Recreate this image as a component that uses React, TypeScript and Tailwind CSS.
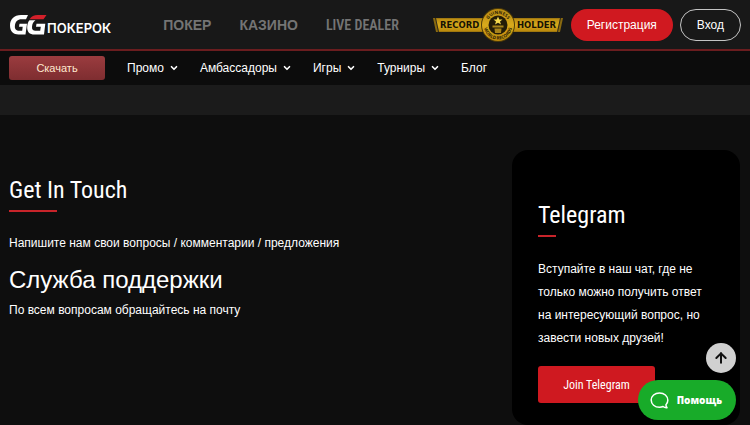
import React from 'react';
import { ArrowUp, ChevronDown } from 'lucide-react';

const condensed = "font-['Roboto_Condensed','Liberation_Sans_Narrow',sans-serif]";

const menu = [
    { label: 'Промо', dropdown: true },
    { label: 'Амбассадоры', dropdown: true },
    { label: 'Игры', dropdown: true },
    { label: 'Турниры', dropdown: true },
    { label: 'Блог', dropdown: false },
];

const Logo = () => (
    <a href="/" aria-label="GGПокерок" className="flex items-end">
        <svg viewBox="0 0 38 20" className="w-[38px] h-5" aria-hidden="true">
            <path
                d="M19 0H12C5 0 1 4.500 1 10.500C1 16.500 4.500 19.500 9.500 19.500H16.500L18 8.800H10.500L10 11.800H13.700L13.200 15.800H10.500C7 15.800 5.600 14 5.900 10.800C6.300 6.500 8.600 4.300 12.500 4.300H17Z"
                fill="#fff"
            />
            <path
                d="M20.500 5.300H26.500C24.300 6.800 23.200 9 23 12C22.900 14.500 24 15.800 26.500 15.800H31.200L31.800 11.800H27L27.500 8.800H36.300L35 19.500H25.500C20.500 19.500 18 17 18.200 12C18.300 9.200 19 7 20.500 5.300Z"
                fill="#fff"
            />
            <path d="M20.500 4.300C22.500 1.200 25 0 28.500 0H37.500L34.500 4.300Z" fill="#d3202a" />
        </svg>
        <span className="text-[13px] leading-[13px] font-semibold font-['Inter',sans-serif] text-white">ПОКЕРОК</span>
    </a>
);

const RecordBadge = () => (
    <svg viewBox="0 0 130 34" className="w-[130px] h-[34px] shrink-0" role="img" aria-label="Guinness record holder">
        <defs>
            <linearGradient id="gold" x1="0" y1="0" x2="0" y2="1">
                <stop offset="0" stopColor="#b98a12" />
                <stop offset="0.5" stopColor="#d8aa1c" />
                <stop offset="1" stopColor="#b8860b" />
            </linearGradient>
            <path id="arcTop" d="M54 17A11 11 0 0 1 76 17" />
            <path id="arcBottom" d="M51 15A14.200 14.200 0 1 0 79 15" />
        </defs>
        <path d="M0 10H130L127 24H3Z" fill="#8a6a10" />
        <path d="M3 10.500H127L124 23.500H6Z" fill="url(#gold)" />
        <path d="M2.500 10L5.500 24M127.500 10L124.500 24" stroke="#1a1a1a" strokeWidth="0.800" />
        <text x="7" y="20" fontSize="8.500" fontWeight="700" fontFamily="DejaVu Sans, sans-serif" fill="#171203">RECORD</text>
        <text x="84" y="20" fontSize="8.500" fontWeight="700" fontFamily="DejaVu Sans, sans-serif" fill="#171203">HOLDER</text>
        <circle cx="65" cy="17" r="17" fill="#4d3b08" />
        <circle cx="65" cy="17" r="16" fill="url(#gold)" />
        <circle cx="65" cy="17" r="9.500" fill="#241c07" />
        <text fontSize="4.500" fontWeight="700" fontFamily="Open Sans, sans-serif" fill="#2a2006" textAnchor="middle">
            <textPath href="#arcTop" startOffset="50%">GUINNESS</textPath>
        </text>
        <text fontSize="4.500" fontWeight="700" fontFamily="Open Sans, sans-serif" fill="#2a2006" textAnchor="middle">
            <textPath href="#arcBottom" startOffset="50%">WORLD RECORDS</textPath>
        </text>
        <path d="M65 8.500L66.300 11.500H69.500L67 13.500L68 16.500L65 14.700L62 16.500L63 13.500L60.500 11.500H63.700Z" fill="#f5d94e" />
        <path d="M59.500 17.500H70.500V19.500H59.500ZM61.500 20.500H68.500L68 25H62Z" fill="#a8841a" />
    </svg>
);

const Header = () => (
    <header className="bg-[#181818]">
        <div className="flex items-center h-[51px] px-[9px] border-b-2 border-[#6b1d1f]">
            <Logo />
            <nav className="flex items-center gap-7 ml-[52px] mr-auto text-sm font-bold text-[#747474]">
                <a href="/poker">ПОКЕР</a>
                <a href="/casino">КАЗИНО</a>
                <a href="/live" className={`${condensed} font-semibold`}>LIVE DEALER</a>
            </nav>
            <RecordBadge />
            <button className="h-8 px-4 ml-2 rounded-full bg-[#d01920] text-xs text-white shrink-0">Регистрация</button>
            <button className="h-8 px-4 ml-[7px] rounded-full border border-[#c4c4c4] text-xs text-white shrink-0">Вход</button>
        </div>
        <div className="flex items-center h-[34px] pl-[9px] bg-[#0c0c0c]">
            <button className="w-24 h-6 mr-[22px] rounded-[3px] bg-linear-to-b from-[#9b3c3f] to-[#7e2d30] text-[11px] text-[#ffe9cf]">
                Скачать
            </button>
            <nav className="flex items-center gap-[21px] text-xs text-white">
                {menu.map((item) => (
                    <a key={item.label} href="#" className="flex items-center gap-[5px]">
                        {item.label}
                        {item.dropdown && <ChevronDown className="w-[10px] h-[10px]" strokeWidth={4} />}
                    </a>
                ))}
            </nav>
        </div>
    </header>
);

const Contact = () => (
    <section className="flex-1 pt-[59px]">
        <h1 className={`${condensed} text-2xl leading-8`}>Get In Touch</h1>
        <div className="w-12 h-[2px] mt-1 bg-[#c8242a]" />
        <p className="mt-[21px] text-xs leading-5">Напишите нам свои вопросы / комментарии / предложения</p>
        <h2 className="mt-[11px] text-2xl leading-8">Служба поддержки</h2>
        <p className="mt-1 text-xs leading-5">По всем вопросам обращайтесь на почту</p>
    </section>
);

const TelegramCard = () => (
    <aside className="w-[228px] mt-[35px] px-[26px] pt-[49px] pb-[22px] rounded-[16px] bg-black">
        <h2 className={`${condensed} text-2xl leading-8`}>Telegram</h2>
        <div className="w-[18px] h-[2px] mt-1 bg-[#c8242a]" />
        <p className="mt-[21px] text-xs leading-[23px]">
            Вступайте в наш чат, где не только можно получить ответ на интересующий вопрос, но завести новых друзей!
        </p>
        <a
            href="#"
            className={`${condensed} flex items-center justify-center w-[117px] h-[37px] mt-4 rounded-[3px] bg-[#cf1920] text-xs`}
        >
            Join Telegram
        </a>
    </aside>
);

const App = () => {
    return (
        <div className="min-h-screen bg-[#0e0e0e] font-['Liberation_Sans',Arial,sans-serif] text-white">
            <Header />
            <div className="h-[30px] bg-[#1b1b1b]" />
            <main className="flex pl-[9px] pr-[10px]">
                <Contact />
                <TelegramCard />
            </main>

            {/* Floating controls */}
            <div className="fixed right-[14px] bottom-[5px] flex flex-col items-end gap-[7px]">
                <button aria-label="Наверх" className="flex items-center justify-center w-[30px] h-[30px] rounded-full bg-[#d0d0d0] text-[#111]">
                    <ArrowUp className="w-4 h-4" strokeWidth={3} />
                </button>
                <button className="flex items-center h-10 pl-3 pr-[14px] gap-2 rounded-full bg-[#18ab29] text-[10px] font-extrabold font-['Open_Sans',sans-serif]">
                    <svg viewBox="0 0 20 18" className="w-[19px] h-[17px]" fill="none" stroke="#fff" strokeWidth="1.600" strokeLinejoin="round" aria-hidden="true">
                        <path d="M16.800 13.500C18.200 12.300 18.800 10.700 18.800 8.800C18.800 4.300 15 1 10 1C5 1 1.200 4.300 1.200 8.600C1.200 13 5 16.200 10 16.200C11.500 16.200 12.700 15.900 13.800 15.400C15 16.400 16.500 16.900 18 16.600C17.200 15.800 16.800 14.700 16.800 13.500Z" />
                    </svg>
                    Помощь
                </button>
            </div>
        </div>
    );
};

export default App;
